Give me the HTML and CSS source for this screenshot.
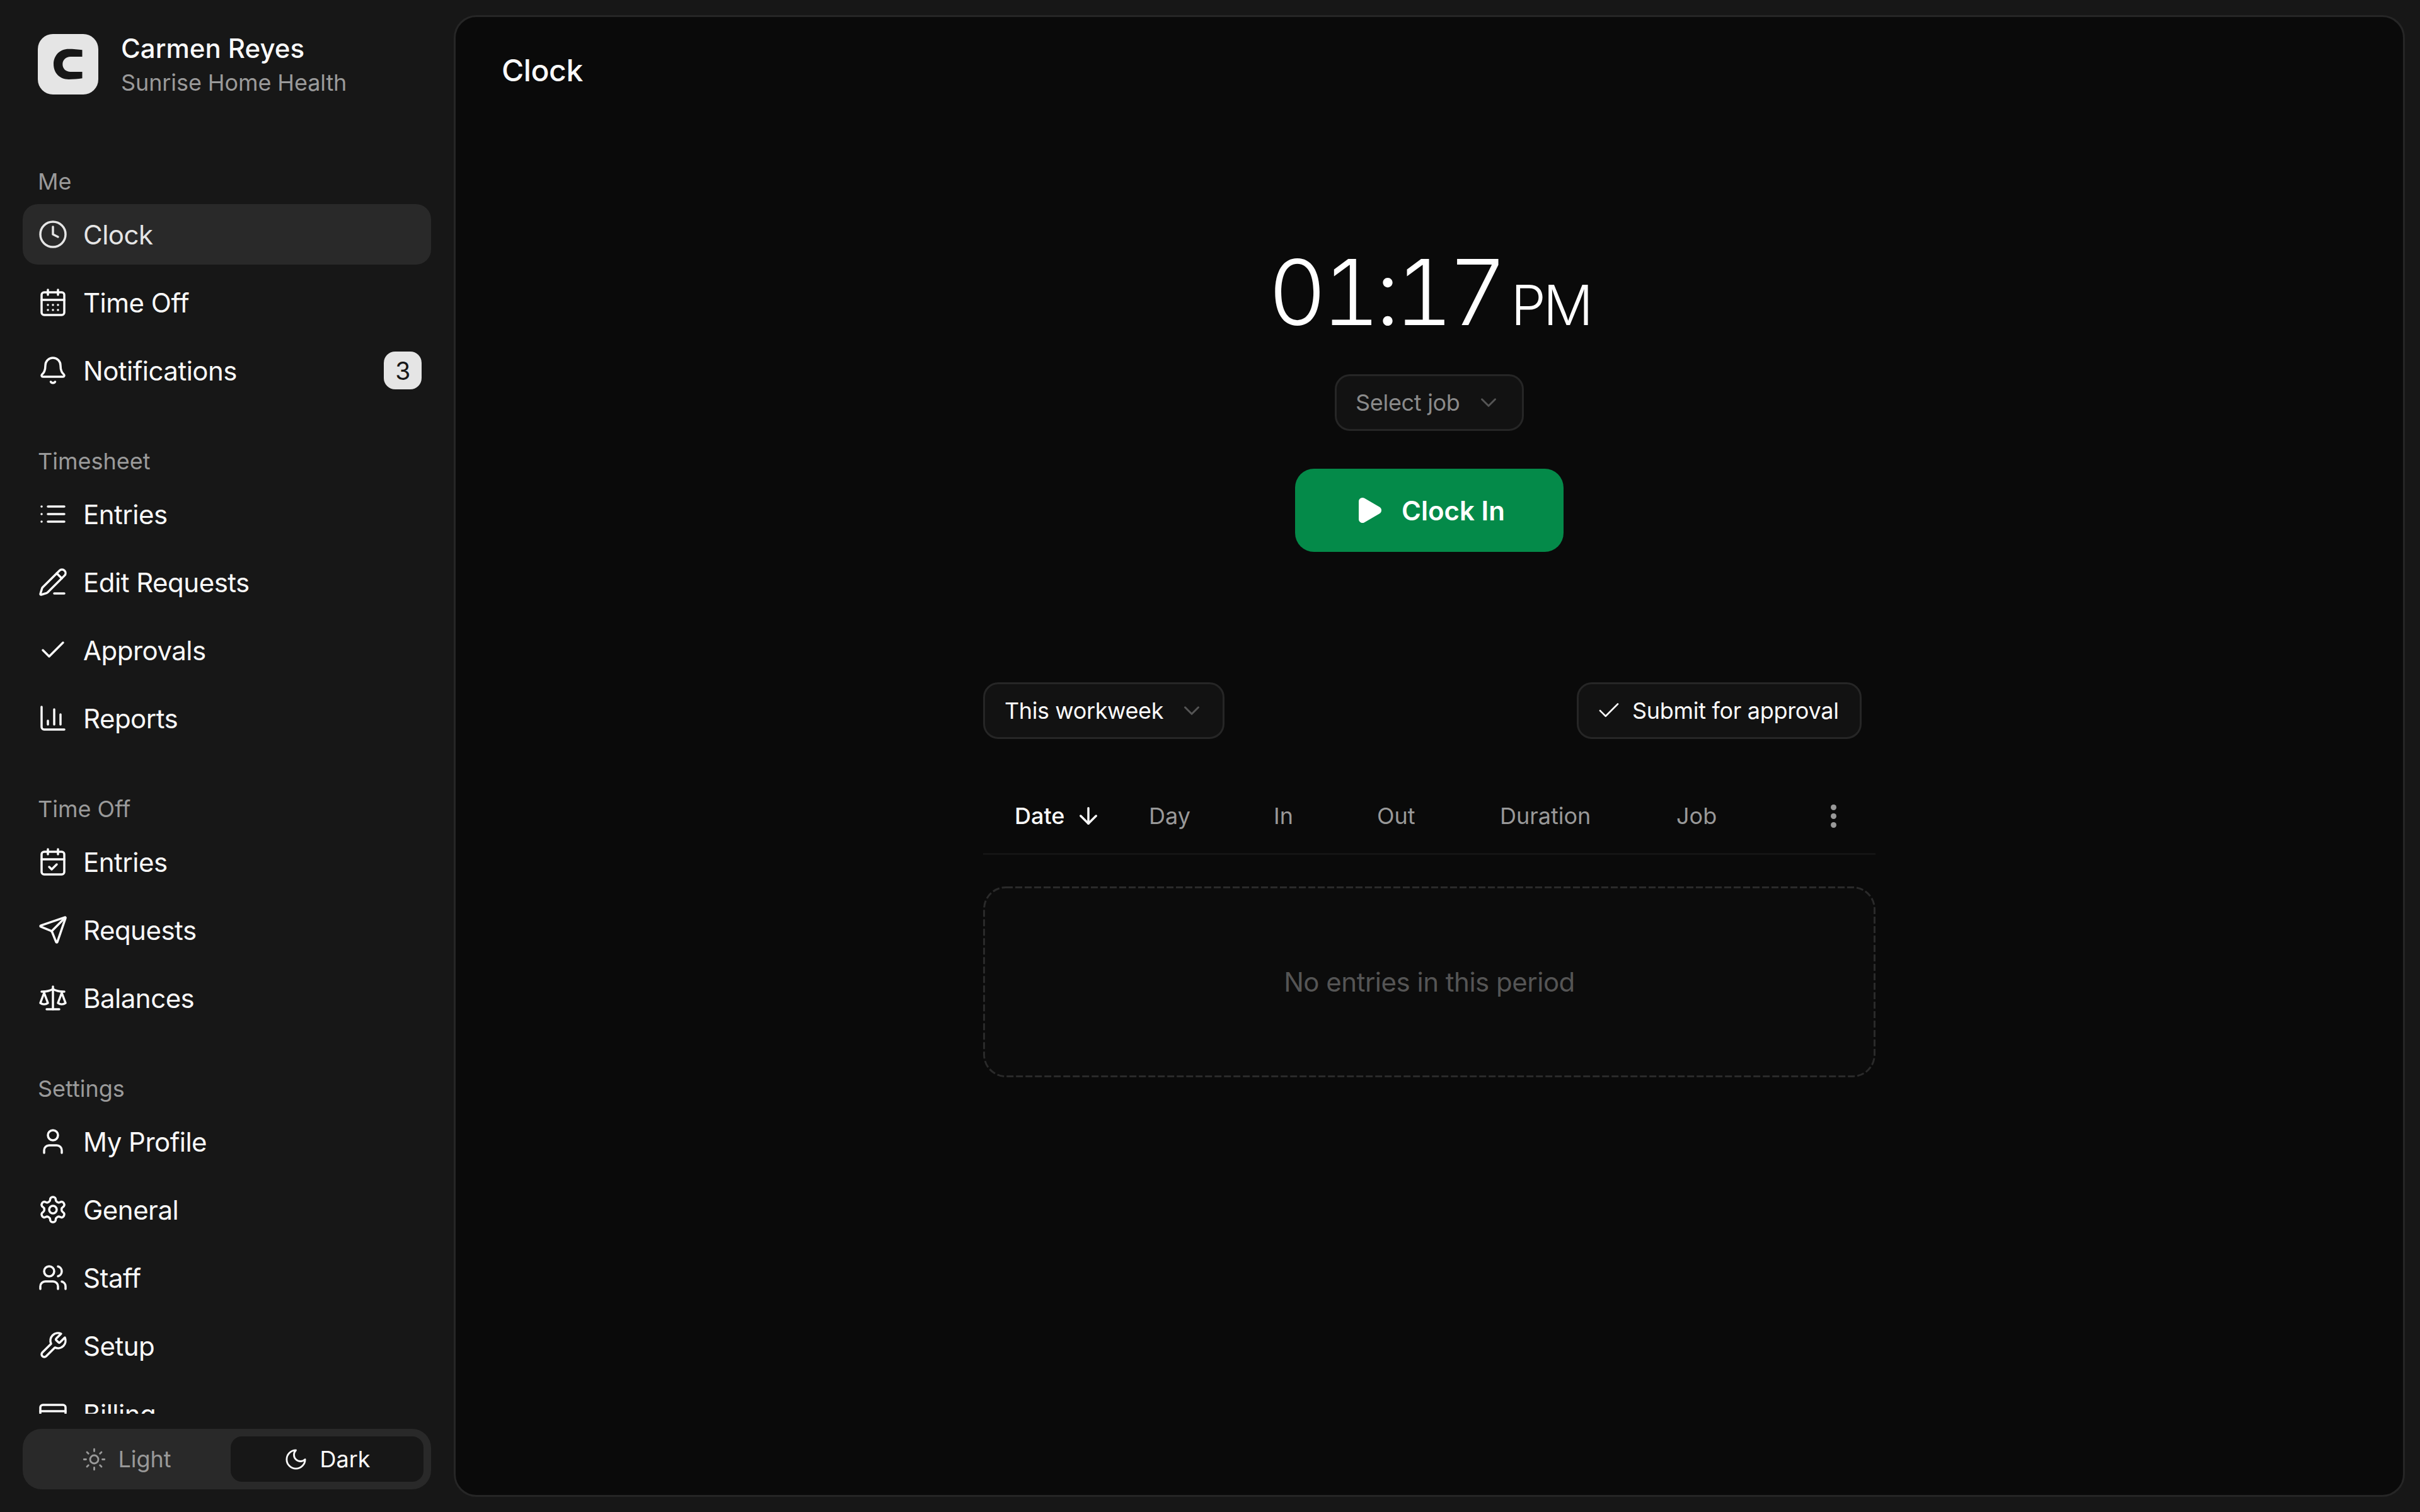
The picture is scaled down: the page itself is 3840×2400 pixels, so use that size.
FILE: index.html
```html
<!DOCTYPE html>
<html lang="en">
<head>
<meta charset="utf-8">
<title>Clock</title>
<link rel="stylesheet" href="styles.css">
</head>
<body>
<div class="app">
  <aside class="sidebar">
    <div class="brand">
      <div class="logo"><svg viewBox="0 0 96 96" width="96" height="96"><path d="M70.5 25.3C64 24.2 56 23.7 49 23.7 35 23.7 25 34 25 47.8 25 62 35 72 49 72 56 72 64 71.5 70.5 70.3V60H52C44.5 60 39.3 55 39.3 48 39.3 41 44.5 36 52 36H70.5Z" fill="#171717"/></svg></div>
      <div class="brand-text">
        <div class="brand-name">Carmen Reyes</div>
        <div class="brand-sub">Sunrise Home Health</div>
      </div>
    </div>
    <nav class="nav">
      <section class="nav-section">
        <div class="nav-label">Me</div>
        <a class="nav-item active"><svg class="ico" viewBox="0 0 24 24"><circle cx="12" cy="12" r="10"/><path d="M12 6v6l4 2"/></svg><span>Clock</span></a>
        <a class="nav-item"><svg class="ico" viewBox="0 0 24 24"><path d="M8 2v4M16 2v4"/><rect x="3" y="4" width="18" height="18" rx="2"/><path d="M3 10h18M8 14h.01M12 14h.01M16 14h.01M8 18h.01M12 18h.01M16 18h.01"/></svg><span>Time Off</span></a>
        <a class="nav-item"><svg class="ico" viewBox="0 0 24 24"><path d="M10.268 21a2 2 0 0 0 3.464 0"/><path d="M3.262 15.326A1 1 0 0 0 4 17h16a1 1 0 0 0 .74-1.673C19.41 13.956 18 12.499 18 8A6 6 0 0 0 6 8c0 4.499-1.411 5.956-2.738 7.326"/></svg><span>Notifications</span><b class="badge">3</b></a>
      </section>
      <section class="nav-section">
        <div class="nav-label">Timesheet</div>
        <a class="nav-item"><svg class="ico" viewBox="0 0 24 24"><path d="M3 12h.01M3 18h.01M3 6h.01M8 12h13M8 18h13M8 6h13"/></svg><span>Entries</span></a>
        <a class="nav-item"><svg class="ico" viewBox="0 0 24 24"><path d="M13 21h8"/><path d="m15 5 4 4"/><path d="M21.174 6.812a1 1 0 0 0-3.986-3.987L3.842 16.174a2 2 0 0 0-.5.83l-1.321 4.352a.5.5 0 0 0 .623.622l4.353-1.32a2 2 0 0 0 .83-.497z"/></svg><span>Edit Requests</span></a>
        <a class="nav-item"><svg class="ico" viewBox="0 0 24 24"><path d="M20 6 9 17l-5-5"/></svg><span>Approvals</span></a>
        <a class="nav-item"><svg class="ico" viewBox="0 0 24 24"><path d="M3 3v16a2 2 0 0 0 2 2h16"/><path d="M18 17V9M13 17V5M8 17v-3"/></svg><span>Reports</span></a>
      </section>
      <section class="nav-section">
        <div class="nav-label">Time Off</div>
        <a class="nav-item"><svg class="ico" viewBox="0 0 24 24"><path d="M8 2v4M16 2v4"/><rect x="3" y="4" width="18" height="18" rx="2"/><path d="M3 10h18"/><path d="m9 16 2 2 4-4"/></svg><span>Entries</span></a>
        <a class="nav-item"><svg class="ico" viewBox="0 0 24 24"><path d="M14.536 21.686a.5.5 0 0 0 .937-.024l6.5-19a.496.496 0 0 0-.635-.635l-19 6.5a.5.5 0 0 0-.024.937l7.93 3.18a2 2 0 0 1 1.112 1.11z"/><path d="m21.854 2.147-10.94 10.939"/></svg><span>Requests</span></a>
        <a class="nav-item"><svg class="ico" viewBox="0 0 24 24"><path d="M12 3v18"/><path d="m19 8 3 8a5 5 0 0 1-6 0zV7"/><path d="M3 7h1a17 17 0 0 0 8-2 17 17 0 0 0 8 2h1"/><path d="m5 8 3 8a5 5 0 0 1-6 0zV7"/><path d="M7 21h10"/></svg><span>Balances</span></a>
      </section>
      <section class="nav-section">
        <div class="nav-label">Settings</div>
        <a class="nav-item"><svg class="ico" viewBox="0 0 24 24"><path d="M19 21v-2a4 4 0 0 0-4-4H9a4 4 0 0 0-4 4v2"/><circle cx="12" cy="7" r="4"/></svg><span>My Profile</span></a>
        <a class="nav-item"><svg class="ico" viewBox="0 0 24 24"><path d="M12.22 2h-.44a2 2 0 0 0-2 2v.18a2 2 0 0 1-1 1.73l-.43.25a2 2 0 0 1-2 0l-.15-.08a2 2 0 0 0-2.73.73l-.22.38a2 2 0 0 0 .73 2.73l.15.1a2 2 0 0 1 1 1.72v.51a2 2 0 0 1-1 1.74l-.15.09a2 2 0 0 0-.73 2.73l.22.38a2 2 0 0 0 2.73.73l.15-.08a2 2 0 0 1 2 0l.43.25a2 2 0 0 1 1 1.73V20a2 2 0 0 0 2 2h.44a2 2 0 0 0 2-2v-.18a2 2 0 0 1 1-1.73l.43-.25a2 2 0 0 1 2 0l.15.08a2 2 0 0 0 2.73-.73l.22-.39a2 2 0 0 0-.73-2.73l-.15-.08a2 2 0 0 1-1-1.74v-.5a2 2 0 0 1 1-1.74l.15-.09a2 2 0 0 0 .73-2.73l-.22-.38a2 2 0 0 0-2.73-.73l-.15.08a2 2 0 0 1-2 0l-.43-.25a2 2 0 0 1-1-1.73V4a2 2 0 0 0-2-2z"/><circle cx="12" cy="12" r="3"/></svg><span>General</span></a>
        <a class="nav-item"><svg class="ico" viewBox="0 0 24 24"><path d="M16 21v-2a4 4 0 0 0-4-4H6a4 4 0 0 0-4 4v2"/><path d="M16 3.128a4 4 0 0 1 0 7.744"/><path d="M22 21v-2a4 4 0 0 0-3-3.87"/><circle cx="9" cy="7" r="4"/></svg><span>Staff</span></a>
        <a class="nav-item"><svg class="ico" viewBox="0 0 24 24"><path d="M14.7 6.3a1 1 0 0 0 0 1.4l1.6 1.6a1 1 0 0 0 1.4 0l3.77-3.77a6 6 0 0 1-7.94 7.94l-6.91 6.91a2.12 2.12 0 0 1-3-3l6.91-6.91a6 6 0 0 1 7.94-7.94l-3.76 3.76z"/></svg><span>Setup</span></a>
        <a class="nav-item"><svg class="ico" viewBox="0 0 24 24"><rect x="2" y="5" width="20" height="14" rx="2"/><path d="M2 10h20"/></svg><span>Billing</span></a>
      </section>
    </nav>
    <div class="theme">
      <button class="theme-opt"><svg class="ico-sm" viewBox="0 0 24 24"><circle cx="12" cy="12" r="4"/><path d="M12 2v2M12 20v2M4.93 4.93l1.41 1.41M17.66 17.66l1.41 1.41M2 12h2M20 12h2M6.34 17.66l-1.41 1.41M19.07 4.93l-1.41 1.41"/></svg>Light</button>
      <button class="theme-opt on"><svg class="ico-sm" viewBox="0 0 24 24"><path d="M12 3a6 6 0 0 0 9 9 9 9 0 1 1-9-9Z"/></svg>Dark</button>
    </div>
  </aside>
  <main class="main">
    <h1 class="title">Clock</h1>
    <div class="clock">
      <div class="time">01:17<span class="ampm">PM</span></div>
      <button class="select job">Select job<svg class="chev" viewBox="0 0 24 24"><path d="m6 9 6 6 6-6"/></svg></button>
      <button class="clock-in"><svg class="play" viewBox="0 0 24 24"><path d="M5 5a2 2 0 0 1 3.008-1.728l11.997 6.998a2 2 0 0 1 .003 3.458l-12 7A2 2 0 0 1 5 19z"/></svg>Clock In</button>
    </div>
    <div class="panel">
      <div class="toolbar">
        <button class="select period">This workweek<svg class="chev" viewBox="0 0 24 24"><path d="m6 9 6 6 6-6"/></svg></button>
        <button class="select submit"><svg class="check" viewBox="0 0 24 24"><path d="M20 6 9 17l-5-5"/></svg>Submit for approval</button>
      </div>
      <div class="thead">
        <div class="th sorted">Date<svg class="arrow" viewBox="0 0 24 24"><path d="M12 5v14"/><path d="m19 12-7 7-7-7"/></svg></div>
        <div class="th">Day</div>
        <div class="th">In</div>
        <div class="th">Out</div>
        <div class="th">Duration</div>
        <div class="th">Job</div>
        <div class="th kebab"><i></i><i></i><i></i></div>
      </div>
      <div class="empty">
        <svg class="dash" viewBox="0 0 1416 303"><rect x="1.5" y="1.5" width="1413" height="300" rx="34.5"/></svg>
        No entries in this period
      </div>
    </div>
  </main>
</div>
</body>
</html>
```
FILE: styles.css
```css
* { box-sizing: border-box; }
html, body { margin: 0; height: 100%; }
body {
  background: #171717;
  color: #fafafa;
  font-family: Inter, "Liberation Sans", sans-serif;
  overflow: hidden;
}
button { font-family: inherit; white-space: nowrap; }
.app { display: flex; width: 3840px; height: 2400px; }

.sidebar {
  width: 720px;
  flex: none;
  display: flex;
  flex-direction: column;
  padding: 54px 36px 36px;
}
.brand { display: flex; align-items: center; gap: 36px; padding-left: 24px; height: 96px; flex: none; }
.logo { width: 96px; height: 96px; border-radius: 24px; background: #e5e5e5; flex: none; }
.logo svg { display: block; }
.brand-text { padding-top: 4px; }
.brand-name { font-size: 42px; line-height: 54px; font-weight: 500; color: #fafafa; }
.brand-sub { font-size: 36px; line-height: 54px; letter-spacing: -0.1px; color: #9a9a9a; }

.nav { flex: 1; min-height: 0; overflow: hidden; margin: 114px 0 24px; }
.nav-section { display: flex; flex-direction: column; gap: 12px; margin-bottom: 72px; }
.nav-label { height: 48px; line-height: 48px; padding-left: 24px; font-size: 36px; color: #9a9a9a; }
.nav-item {
  height: 96px;
  display: flex;
  align-items: center;
  gap: 24px;
  padding: 0 15px 0 24px;
  border-radius: 24px;
  font-size: 42px;
  letter-spacing: -0.5px;
  color: #fafafa;
}
.nav-item.active { background: #292929; color: #e5e5e5; }
.nav-item span { flex: 1; }
.ico { width: 48px; height: 48px; flex: none; fill: none; stroke: currentColor; stroke-width: 1.75; stroke-linecap: round; stroke-linejoin: round; }
.badge {
  width: 60px; height: 60px; border-radius: 18px; background: #e5e5e5; color: #171717;
  display: flex; align-items: center; justify-content: center;
  font-size: 39px; font-weight: 400;
}

.theme { flex: none; height: 96px; background: #292929; border-radius: 30px; padding: 12px; display: flex; gap: 12px; }
.theme-opt {
  flex: 1; border: 0; border-radius: 18px; background: transparent; color: #999;
  display: flex; align-items: center; justify-content: center; gap: 18px; font-size: 36px; padding: 0;
}
.theme-opt.on { background: #171717; color: #fafafa; }
.ico-sm { width: 39px; height: 39px; fill: none; stroke: currentColor; stroke-width: 1.75; stroke-linecap: round; stroke-linejoin: round; }

.main {
  width: 3096px;
  height: 2352px;
  margin: 24px 24px 24px 0;
  border: 3px solid #262626;
  border-radius: 36px;
  background: #0a0a0a;
  padding: 55px 0 0;
  display: flex;
  flex-direction: column;
  align-items: center;
}
.title { align-self: flex-start; margin: 0 0 0 73px; font-size: 48px; line-height: 60px; font-weight: 500; letter-spacing: -0.4px; color: #fafafa; }
.clock { display: flex; flex-direction: column; align-items: center; margin-top: 250px; }
.time { font-size: 144px; line-height: 144px; font-weight: 350; letter-spacing: -8px; font-variant-numeric: tabular-nums; color: #fff; display: flex; align-items: baseline; gap: 14px; }
.ampm { font-size: 88px; font-weight: 300; letter-spacing: -4px; }
.select {
  height: 90px; border: 3px solid #262626; border-radius: 24px; background: #121212;
  display: inline-flex; align-items: center; font-size: 36px; letter-spacing: -0.3px; color: #fafafa; padding: 0;
}
.job { width: 300px; margin-top: 38px; color: #8a8a8a; padding-left: 30px; }
.chev { width: 42px; height: 42px; fill: none; stroke: #555; stroke-width: 1.75; stroke-linecap: round; stroke-linejoin: round; margin-left: 24px; flex: none; }
.clock-in {
  width: 426px; height: 132px; margin-top: 60px; border: 0; border-radius: 30px; background: #048a49; color: #fff;
  display: flex; align-items: center; justify-content: center; gap: 28px; font-size: 42px; font-weight: 600; padding: 0;
}
.play { width: 48px; height: 48px; fill: #fff; stroke: #fff; stroke-width: 2; stroke-linejoin: round; }
.panel { width: 1416px; margin-top: 207px; }
.toolbar { display: flex; justify-content: space-between; padding-right: 22px; }
.period { width: 383px; padding-left: 31px; letter-spacing: -0.4px; }
.submit { width: 452px; padding-left: 27px; gap: 16px; }
.check { width: 42px; height: 42px; fill: none; stroke: #fafafa; stroke-width: 1.5; stroke-linecap: round; stroke-linejoin: round; }
.thead {
  margin-top: 63px;
  height: 121px;
  border-bottom: 3px solid #141414;
  display: grid;
  grid-template-columns: 213px 198px 164px 195px 280px 228px 1fr;
  align-items: center;
  padding-left: 50px;
}
.th { font-size: 36px; color: #999; display: flex; align-items: center; }
.th.sorted { color: #fafafa; font-weight: 500; gap: 17px; }
.arrow { width: 42px; height: 42px; fill: none; stroke: #fafafa; stroke-width: 2; stroke-linecap: round; stroke-linejoin: round; }
.kebab { flex-direction: column; gap: 5px; align-items: flex-start; padding-left: 17px; }
.kebab i { width: 9px; height: 9px; border-radius: 50%; background: #999; display: block; }
.empty {
  position: relative;
  margin-top: 50px;
  height: 303px;
  border-radius: 36px;
  background: #0c0c0c;
  display: flex; align-items: center; justify-content: center;
  font-size: 42px; letter-spacing: -0.5px; color: #555;
}
.dash { position: absolute; inset: 0; width: 100%; height: 100%; }
.dash rect { fill: none; stroke: #2a2a2a; stroke-width: 3; stroke-dasharray: 11 4; }
```
